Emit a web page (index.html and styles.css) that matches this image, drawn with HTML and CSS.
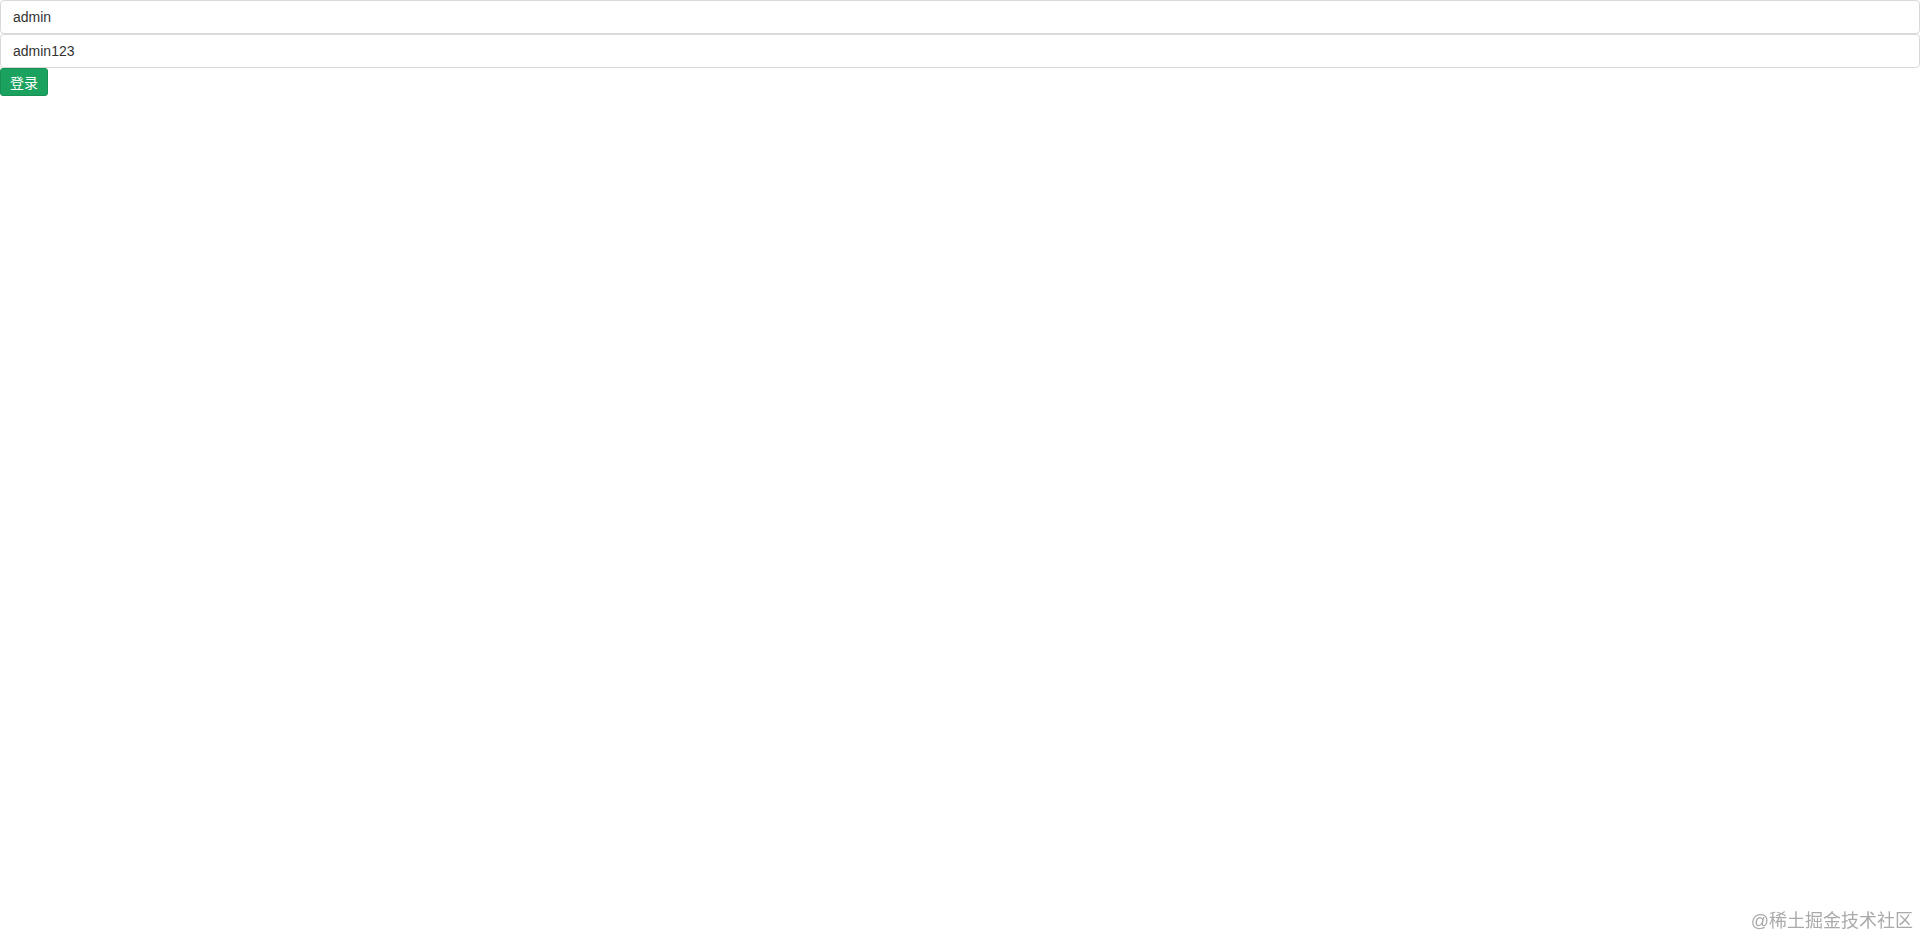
FILE: index.html
```html
<!DOCTYPE html>
<html lang="zh-CN">
<head>
<meta charset="UTF-8">
<meta name="viewport" content="width=device-width, initial-scale=1.0">
<title>登录</title>
<link rel="stylesheet" href="styles.css">
</head>
<body>
<form class="login-form">
    <input class="form-control" type="text" value="admin">
    <input class="form-control" type="text" value="admin123">
    <button class="btn-login" type="button">登录</button>
</form>
<div class="watermark">@稀土掘金技术社区</div>
</body>
</html>
```

FILE: styles.css
```css
body {
    font-family: "Liberation Sans", Arial, "Noto Sans CJK SC", sans-serif;
    font-size: 14px;
    color: #333;
    margin: 0;
    padding: 0;
    background-color: #fff;
    height: 100vh;
}

.login-form {
    display: flex;
    flex-direction: column;
    align-items: flex-start;
}

.form-control {
    box-sizing: border-box;
    display: block;
    width: 100%;
    height: 34px;
    padding: 6px 12px;
    font-family: inherit;
    font-size: 14px;
    color: #333;
    background-color: #fff;
    border: 1px solid #d9d9d9;
    border-radius: 4px;
    margin: 0;
    outline: none;
}

.btn-login {
    box-sizing: border-box;
    height: 28px;
    padding: 0 9px;
    font-family: "Noto Sans CJK SC", sans-serif;
    font-size: 14px;
    line-height: 26px;
    white-space: nowrap;
    color: #fff;
    background-color: #1ba25e;
    border: 1px solid #179254;
    border-radius: 3px;
    cursor: pointer;
}

.watermark {
    position: fixed;
    right: 7px;
    bottom: 9px;
    font-size: 18px;
    color: #aaa;
}
```
